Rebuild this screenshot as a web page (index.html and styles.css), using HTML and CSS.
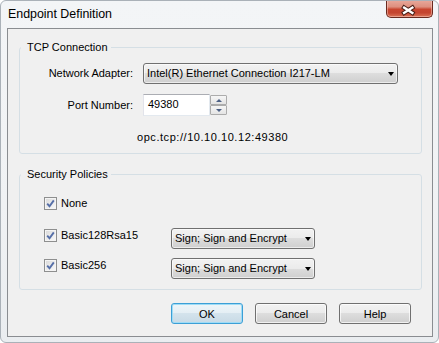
FILE: index.html
```html
<!DOCTYPE html>
<html>
<head>
<meta charset="utf-8">
<link rel="stylesheet" href="styles.css">
</head>
<body>
<div class="window">
  <div class="titlebar">
    <span class="title">Endpoint Definition</span>
    <div class="close">
      <svg width="47" height="18" viewBox="0 0 47 18">
        <path d="M18.5 7.5 L27 13 M27 7.5 L18.5 13" stroke="#4a2018" stroke-width="4.4" stroke-linecap="square" fill="none"/>
        <path d="M18.5 7.5 L27 13 M27 7.5 L18.5 13" stroke="#ffffff" stroke-width="2.4" stroke-linecap="square" fill="none"/>
      </svg>
    </div>
  </div>
  <div class="client">
    <fieldset class="group g1">
      <legend>TCP Connection</legend>
      <div class="form-row r1">
        <span class="lbl">Network Adapter:</span>
        <div class="combo wide"><span class="val">Intel(R) Ethernet Connection I217-LM</span><span class="arrow"></span></div>
      </div>
      <div class="form-row r2">
        <span class="lbl">Port Number:</span>
        <div class="spin">
          <div class="edit">49380</div>
          <div class="spin-btns">
            <div class="sb"><span class="up"></span></div>
            <div class="sb"><span class="down"></span></div>
          </div>
        </div>
      </div>
      <div class="address">opc.tcp://10.10.10.12:49380</div>
    </fieldset>
    <fieldset class="group g2">
      <legend>Security Policies</legend>
      <div class="pol-row p1">
        <label class="chk"><span class="box"><svg width="11" height="11" viewBox="0 0 11 11"><path d="M2.2 5.6 L4.5 8.2 L8.8 2.4" stroke="#566fa8" stroke-width="1.9" fill="none"/></svg></span><span>None</span></label>
      </div>
      <div class="pol-row p2">
        <label class="chk"><span class="box"><svg width="11" height="11" viewBox="0 0 11 11"><path d="M2.2 5.6 L4.5 8.2 L8.8 2.4" stroke="#566fa8" stroke-width="1.9" fill="none"/></svg></span><span>Basic128Rsa15</span></label>
        <div class="combo small"><span class="val">Sign; Sign and Encrypt</span><span class="arrow"></span></div>
      </div>
      <div class="pol-row p3">
        <label class="chk"><span class="box"><svg width="11" height="11" viewBox="0 0 11 11"><path d="M2.2 5.6 L4.5 8.2 L8.8 2.4" stroke="#566fa8" stroke-width="1.9" fill="none"/></svg></span><span>Basic256</span></label>
        <div class="combo small"><span class="val">Sign; Sign and Encrypt</span><span class="arrow"></span></div>
      </div>
    </fieldset>
    <div class="buttons">
      <button class="btn default">OK</button>
      <button class="btn">Cancel</button>
      <button class="btn">Help</button>
    </div>
  </div>
</div>
</body>
</html>
```

FILE: styles.css
```css
* { box-sizing: border-box; }
html, body { margin: 0; padding: 0; background: #ffffff; }
body {
  font-family: "Liberation Sans", Arial, sans-serif;
  font-size: 11px;
  color: #000;
}
.window {
  width: 439px;
  height: 343px;
  display: flex;
  flex-direction: column;
  background: linear-gradient(to bottom, #f3f5f7 0%, #f0f2f4 60%, #eaedf0 100%);
  border: 1px solid #aab1b8;
  border-radius: 6px;
  overflow: hidden;
}
.titlebar {
  height: 27px;
  display: flex;
  justify-content: space-between;
  align-items: flex-start;
  padding-left: 7px;
  padding-right: 5px;
  flex: none;
}
.title {
  font-size: 12.4px;
  line-height: 16px;
  margin-top: 5px;
  color: #000;
}
.close {
  width: 47px;
  height: 18px;
  margin-top: -1px;
  border: 1px solid #6a2a1f;
  border-top: none;
  border-radius: 0 0 5px 5px;
  background: linear-gradient(to bottom, #e9aa9c 0%, #de907f 40%, #c8462f 55%, #c44530 75%, #db7356 100%);
  box-shadow: inset 0 0 0 1px rgba(255, 220, 210, 0.45);
  display: flex;
}
.close svg { margin-left: -1px; }
.client {
  margin-left: 6px;
  width: 426px;
  height: 309px;
  border: 1px solid #8a8d91;
  background: #f0f0f0;
  padding: 12px 10px 0 11px;
  display: flex;
  flex-direction: column;
  flex: none;
}
fieldset.group {
  margin: 0;
  padding: 0;
  border: 1px solid #d5dfe5;
  border-radius: 3px;
  min-width: 0;
}
fieldset.group legend {
  margin-left: 1px;
  padding: 0 3px 0 6px;
  line-height: 13px;
}
fieldset.g1 { padding: 9px 0 9px 0; }
.form-row { display: flex; align-items: center; }
.r1 { height: 21px; }
.r2 { height: 22px; margin-top: 10px; }
.lbl {
  width: 113px;
  text-align: right;
  margin-right: 10px;
  line-height: 13px;
}
.combo {
  display: flex;
  align-items: center;
  height: 21px;
  border: 1px solid #707070;
  border-radius: 3px;
  background: linear-gradient(to bottom, #f2f2f2 0%, #ebebeb 50%, #dddddd 50%, #cfcfcf 100%);
  box-shadow: inset 0 0 0 1px rgba(255, 255, 255, 0.6);
  padding-left: 3px;
  padding-right: 3px;
}
.combo .val { flex: 1; line-height: 13px; white-space: nowrap; overflow: hidden; }
.combo .arrow {
  width: 0;
  height: 0;
  border-left: 3.5px solid transparent;
  border-right: 3.5px solid transparent;
  border-top: 4px solid #000;
  margin-top: 1px;
}
.combo.wide { width: 255px; }
.combo.small { width: 144px; }
.spin { display: flex; width: 84px; height: 22px; }
.spin .edit {
  width: 67px;
  height: 22px;
  background: #ffffff;
  border: 1px solid;
  border-color: #abadb3 #e3e9ef #e3e9ef #e2e3ea;
  padding-left: 4px;
  line-height: 19px;
}
.spin-btns {
  width: 17px;
  display: flex;
  flex-direction: column;
  gap: 0;
  padding: 1px 0;
}
.sb {
  flex: 1;
  border: 1px solid #acacac;
  border-radius: 1px;
  background: linear-gradient(to bottom, #f6f6f6, #e4e4e4);
  display: flex;
  align-items: center;
  justify-content: center;
}
.sb .up {
  width: 0; height: 0;
  border-left: 3.5px solid transparent;
  border-right: 3.5px solid transparent;
  border-bottom: 3px solid #4d6185;
}
.sb .down {
  width: 0; height: 0;
  border-left: 3.5px solid transparent;
  border-right: 3.5px solid transparent;
  border-top: 3px solid #4d6185;
}
.address {
  margin-top: 15px;
  padding-left: 117px;
  line-height: 13px;
  letter-spacing: 0.55px;
}
fieldset.g2 { margin-top: 14px; padding: 15px 0 10px 0; }
.pol-row { display: flex; align-items: flex-start; height: 21px; padding-left: 24px; }
.p1 { margin-bottom: 11px; }
.p2 { margin-bottom: 9px; }
.chk {
  width: 127px;
  display: flex;
  align-items: center;
  margin-top: 1px;
  line-height: 13px;
}
.box {
  width: 13px;
  height: 13px;
  border: 1px solid #8e8f8f;
  background: linear-gradient(135deg, #d8d8d8 0%, #eaeaea 50%, #fafafa 100%);
  box-shadow: inset 0 0 0 1px #f4f4f4;
  margin-right: 4px;
  display: flex;
  align-items: center;
  justify-content: center;
  flex: none;
}
.buttons {
  margin-top: 13px;
  display: flex;
  justify-content: flex-end;
  gap: 12px;
  padding-right: 11px;
}
.btn {
  width: 72px;
  height: 21px;
  margin: 0;
  padding: 0;
  font: inherit;
  color: #000;
  border: 1px solid #707070;
  border-radius: 3px;
  background: linear-gradient(to bottom, #f2f2f2 0%, #ebebeb 50%, #dddddd 50%, #cfcfcf 100%);
  box-shadow: inset 0 0 0 1px rgba(255, 255, 255, 0.7);
}
.btn.default {
  border-color: #3c9fd6;
  box-shadow: inset 0 0 0 1px #9fdcf6;
  background: linear-gradient(to bottom, #eef5f9 0%, #e4eef4 50%, #d4e3ec 50%, #c8dae6 100%);
}
```
